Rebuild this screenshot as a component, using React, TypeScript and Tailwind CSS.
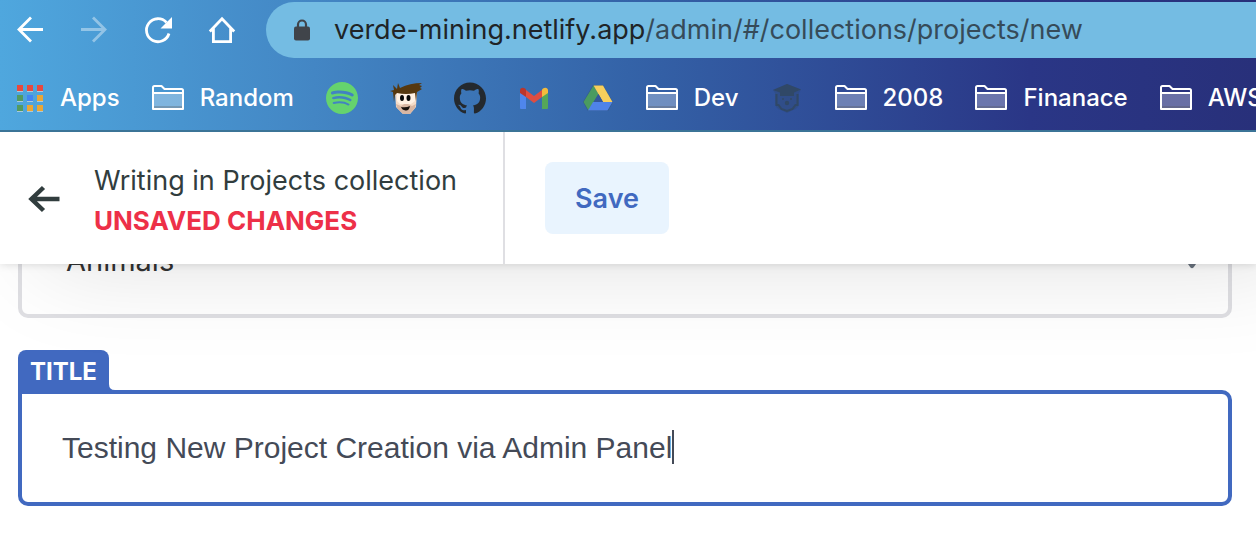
import { useState } from "react";
import type { ReactNode } from "react";
import { SiGithub, SiSpotify } from "react-icons/si";

const iconButton = "flex size-8 shrink-0 items-center justify-center text-white";

function BackIcon() {
  return (
    <svg viewBox="0 0 32 32" className="size-8" fill="none" stroke="currentColor" strokeWidth="2.8">
      <path d="M29 15.5H4.500M17 3.500 5 15.500l12 12" strokeLinejoin="miter" />
    </svg>
  );
}

function ForwardIcon() {
  return (
    <svg viewBox="0 0 32 32" className="size-8" fill="none" stroke="currentColor" strokeWidth="2.8">
      <path d="M3 15.500H27.500M15 3.500 27 15.500l-12 12" />
    </svg>
  );
}

function ReloadIcon() {
  return (
    <svg viewBox="0 0 32 32" className="size-8" fill="none">
      <path d="M27 19.500A11.500 11.500 0 1 1 24.500 8.500" stroke="currentColor" strokeWidth="2.800" />
      <path d="M30 3v11.500H18.500z" fill="currentColor" />
    </svg>
  );
}

function HomeIcon() {
  return (
    <svg viewBox="0 0 32 32" className="size-8" fill="none" stroke="currentColor" strokeWidth="2.800">
      <path d="M3.800 17.500 16 4.800l12.200 12.700M7.400 14.500v13.100h17.200V14.500" />
    </svg>
  );
}

function LockIcon() {
  return (
    <svg viewBox="0 0 16 22" className="h-[22px] w-4 shrink-0" fill="none">
      <path d="M4 9V5.500a4 4 0 0 1 8 0V9" stroke="#40444a" strokeWidth="2.200" />
      <rect y="7.500" width="16" height="14" rx="2" fill="#40444a" />
    </svg>
  );
}

function AppsIcon() {
  const rows = [
    ["#e8493e", "#e8493e", "#e8493e"],
    ["#539a60", "#4285f0", "#e9a637"],
    ["#539a60", "#e9a637", "#e9a637"],
  ];
  return (
    <svg viewBox="-1 0 28 27" className="h-[27px] w-7 shrink-0">
      {rows.map((row, y) =>
        row.map((color, x) => (
          <g key={`${x}-${y}`}>
            <rect x={x * 10} y={y * 10} width="6" height="7" fill="#a9c9dc" />
            <rect x={x * 10} y={y * 10} width="6" height="6" fill={color} />
          </g>
        )),
      )}
    </svg>
  );
}

function FolderIcon() {
  return (
    <svg viewBox="0 0 32 26" className="h-[26px] w-8 shrink-0">
      <rect x="2" y="8" width="28" height="15" fill="#fff" fillOpacity=".3" />
      <rect x="2" y="21" width="28" height="3" fill="#555" fillOpacity=".3" />
      <path
        d="M1 24V2.500Q1 1 2.500 1H9.500L12.500 4H29.500Q31 4 31 5.500V24H1zM1 8H31"
        fill="none"
        stroke="#fff"
        strokeWidth="2"
        strokeLinejoin="round"
      />
    </svg>
  );
}

function FaceIcon() {
  return (
    <svg viewBox="0 0 32 32" className="size-8">
      <path d="M5 9q11-3 22 0l-1 16-6 7h-7l-7-7z" fill="#f5dcc8" />
      <path d="M6 22l5 2 5-3 6 3 4-2-1 4-5 6h-7l-6-6z" fill="#d9b7a3" />
      <path d="M7 10h18v9l-4 3H10l-3-3z" fill="#fff1e4" />
      <path d="M4 20 3 10 0 9l4-1-1-5 4 4 1-6 2 5Q20 1 32 1l-3 2 3 1-2 2 2 1-5 3-1 9-1-8q-9 2-18 0l-2 2z" fill="#56380f" />
      <ellipse cx="12" cy="16" rx="2" ry="3" fill="#080808" />
      <ellipse cx="18.500" cy="16" rx="2" ry="3" fill="#080808" />
      <path d="M11 25q5 1 9-1-1 5-4.500 4.500T11 25z" fill="#17100c" />
    </svg>
  );
}

function GmailIcon() {
  return (
    <svg viewBox="0 0 32 32" className="size-8">
      <path d="M2 8v18q0 1 1 1h5V13z" fill="#4f86ec" />
      <path d="M24 13v14h5q1 0 1-1V8z" fill="#55a65a" />
      <path d="M8 8l8 6 8-6v7l-8 6-8-6z" fill="#df4d41" />
      <path d="M2 10V8.500C2 5.500 5 5 7 6.500L8 7.500V15l-6-4z" fill="#bb352c" />
      <path d="M30 10V8.500C30 5.500 27 5 25 6.500L24 7.500V15l6-4z" fill="#f3bb3d" />
    </svg>
  );
}

function DriveIcon() {
  return (
    <svg viewBox="0 0 32 32" className="size-8">
      <path d="M11 3h10l10 17-5 9H6L1 20z" fill="#35547d" fillOpacity=".7" />
      <path d="M11.500 3.500 16.500 12 6.500 28.500 1.500 20z" fill="#4a9b60" />
      <path d="M11.500 3.500h9.500l9.500 16.500H21z" fill="#f8cf5c" />
      <path d="M11 20h19.500l-5 8.500H6z" fill="#4f83e8" />
      <path d="M16.500 12 21 20H11.500z" fill="#33589b" />
    </svg>
  );
}

function ScholarIcon() {
  return (
    <svg viewBox="0 0 32 32" className="size-8" fill="#304867">
      <path d="M16 2 30 7.500 28 11v11q-1 5-6 6l-6 3-6-3q-5-1-6-6V11L2 8z" fillOpacity=".35" />
      <path d="M16 2 30 7.500l-7 3V14H9v-3.500L2 8z" />
      <path d="M5.500 12v11h2l3 4 5.500 2 5.500-2 3-4h2V12" fill="none" stroke="#304867" strokeWidth="2" />
      <circle cx="16" cy="21" r="2.200" />
      <circle cx="12" cy="17" r="1" />
      <circle cx="20" cy="17" r="1" />
    </svg>
  );
}

function Bookmark({ icon, label, name }: { icon: ReactNode; label?: string; name?: string }) {
  return (
    <a href="#" aria-label={name} className="flex h-8 shrink-0 items-center gap-4">
      {icon}
      {label && <span>{label}</span>}
    </a>
  );
}

function Browser() {
  return (
    <div className="relative z-20 overflow-hidden border-b-2 border-[#3b7497] bg-[linear-gradient(to_right,#4fa7de,#4386c4_25%,#3463a8_50%,#2a3686_82%,#28307a)]">
      <div className="flex items-center gap-7 pt-0.5 pl-3.5">
        <div className="flex shrink-0 gap-8">
          <button aria-label="Back" className={iconButton}><BackIcon /></button>
          <button aria-label="Forward" className="flex size-8 shrink-0 items-center justify-center text-white/40"><ForwardIcon /></button>
          <button aria-label="Reload" className={iconButton}><ReloadIcon /></button>
          <button aria-label="Home" className={iconButton}><HomeIcon /></button>
        </div>
        <div className="flex h-14 grow items-center gap-6 rounded-l-full bg-[#74bce3] pl-7 text-[27px] whitespace-nowrap text-[#364b59]">
          <LockIcon />
          <span><span className="text-[#202427]">verde-mining.netlify.app</span>/admin/#/collections/projects/new</span>
        </div>
      </div>
      <nav className="flex h-[72px] items-center gap-8 pt-2 pl-4 text-2xl font-medium whitespace-nowrap text-white">
        <Bookmark icon={<AppsIcon />} label="Apps" />
        <Bookmark icon={<FolderIcon />} label="Random" />
        <Bookmark icon={<SiSpotify className="size-8 text-[#65d36e]" />} name="Spotify" />
        <Bookmark icon={<FaceIcon />} name="Profile" />
        <Bookmark icon={<SiGithub className="size-8 text-[#24292e]" />} name="GitHub" />
        <Bookmark icon={<GmailIcon />} name="Gmail" />
        <Bookmark icon={<DriveIcon />} name="Drive" />
        <Bookmark icon={<FolderIcon />} label="Dev" />
        <Bookmark icon={<ScholarIcon />} name="Scholar" />
        <Bookmark icon={<FolderIcon />} label="2008" />
        <Bookmark icon={<FolderIcon />} label="Finanace" />
        <Bookmark icon={<FolderIcon />} label="AWS" />
      </nav>
    </div>
  );
}

function Toolbar() {
  return (
    <header className="relative z-10 flex h-[132px] bg-white shadow-[0_1px_8px_rgba(0,0,0,0.12),40px_0_100px_rgba(0,0,0,0.13)]">
      <a href="#" className="flex items-center gap-[34px] border-r-2 border-[#dfdfe3] pt-0.5 pr-[46px] pl-7 whitespace-nowrap">
        <svg viewBox="0 0 32 28" className="h-7 w-8" fill="none" stroke="#313d3e" strokeWidth="4.500">
          <path d="M31.500 14H4M15.500 2.500 3.500 14l12 11.500" />
        </svg>
        <div className="pt-1">
          <div className="text-[27px] leading-10 text-[#313d3e]">Writing in Projects collection</div>
          <div className="text-[26px] leading-10 font-bold text-[#ed3048]">UNSAVED CHANGES</div>
        </div>
      </a>
      <div className="flex items-center pl-10">
        <button className="h-[72px] rounded-lg bg-[#e9f4fe] px-[30px] pt-0.5 text-[27px] font-semibold text-[#4169c0]">Save</button>
      </div>
    </header>
  );
}

export default function App() {
  const [title, setTitle] = useState("Testing New Project Creation via Admin Panel");
  return (
    <div className="min-h-screen overflow-hidden bg-white font-['Inter',sans-serif]">
      <Browser />
      <Toolbar />
      <main className="-mt-[62px] flex flex-col gap-8 pr-6 pl-[18px]">
        <div className="relative">
          <select aria-label="Category" className="h-[116px] w-full appearance-none rounded-[10px] border-4 border-[#dfdfe3] bg-white px-11 pt-0.5 text-[29px] text-[#333]">
            <option>Animals</option>
          </select>
          <svg viewBox="0 0 16 10" className="absolute top-[57px] right-8 h-2.5 w-4" fill="#6b7480">
            <path d="M1 1h14L9.500 8.500q-1.500 1.500-3 0z" />
          </svg>
        </div>
        <div>
          <div className="flex items-end">
            <label htmlFor="title" className="flex h-10 items-center rounded-t-lg bg-[#4169c0] px-3 pt-1 text-2xl font-bold text-white">TITLE</label>
            <svg viewBox="0 0 6 6" className="size-1.5" fill="#4169c0"><path d="M0 0Q0 6 6 6H0z" /></svg>
          </div>
          <div className="flex h-[116px] items-center rounded-[10px] rounded-tl-none border-4 border-[#4169c0] bg-white px-10 pb-0.5">
            <input
              id="title"
              value={title}
              onChange={(event) => setTitle(event.target.value)}
              className="field-sizing-content max-w-full font-['Liberation_Sans',sans-serif] text-[30px] text-[#444a57] caret-transparent outline-none"
            />
            <span className="h-[34px] w-0.5 bg-[#444a57]" />
          </div>
        </div>
      </main>
    </div>
  );
}
